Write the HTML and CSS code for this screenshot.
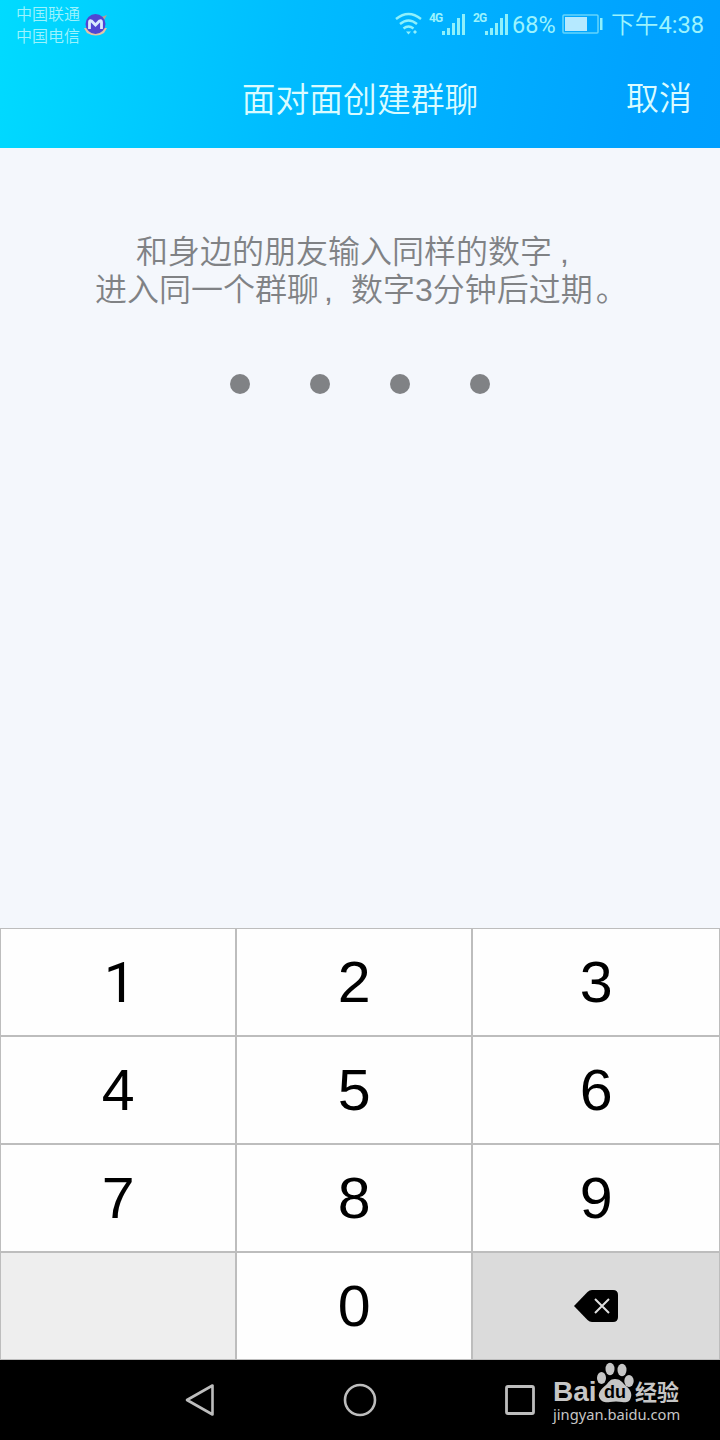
FILE: index.html
```html
<!DOCTYPE html>
<html lang="zh-CN">
<head>
  <meta charset="UTF-8">
  <title>面对面创建群聊</title>
  <link rel="stylesheet" href="styles.css">
</head>
<body>
  <header class="header">
    <div class="status">
      <div class="carriers">
        <div>中国联通</div>
        <div>中国电信</div>
      </div>
      <svg class="app-icon" width="26" height="26" viewBox="0 0 26 26">
        <path d="M2 15l3 5q9 5 17 0l3-5z" fill="#e3c3a5"/>
        <path d="M19 4l6-2-3 5z" fill="#b4a095"/>
        <circle cx="13.500" cy="11" r="10" fill="#5146d2"/>
        <path d="M7.500 16V9q0-2 2-1l4 4 4-4q2-1 2 1v7" fill="none" stroke="#d8eaff" stroke-width="2.800"/>
      </svg>
      <div class="indicators">
        <svg class="wifi" width="28" height="24" viewBox="0 0 28 24" fill="none" stroke="#8ff0fb" stroke-width="2.4">
          <path d="M1 7q12.500-10 25 0M5 12q8.500-7 17 0M8.500 16.500q5-4 10 0"/>
          <path d="M11 19.500h5l-2.500 3zM18 20l2-2 2 2-2 2z" fill="#8ff0fb" stroke="none"/>
        </svg>
        <span class="net">4G</span>
        <svg class="signal" width="24" height="24" viewBox="0 0 24 24" fill="#8ff0fb">
          <path d="M0 19h3v4H0zM5 16h3v7H5zM10 11h3v12h-3zM15 6h3v17h-3zM20 2h3v21h-3z"/>
        </svg>
        <span class="net net-second">2G</span>
        <svg class="signal" width="24" height="24" viewBox="0 0 24 24" fill="#8ff0fb">
          <path d="M0 19h3v4H0zM5 16h3v7H5zM10 11h3v12h-3zM15 6h3v17h-3zM20 2h3v21h-3z"/>
        </svg>
        <span class="percent">68%</span>
        <svg class="battery" width="42" height="20" viewBox="0 0 42 20">
          <rect x="1" y="1" width="35" height="18" rx="1" fill="none" stroke="#66d5fb" stroke-width="1.500"/>
          <rect x="3" y="3" width="22" height="14" fill="#b5e9ff"/>
          <rect x="38" y="4" width="2.500" height="12" fill="#8ff0fb"/>
        </svg>
        <span class="time">下午<span class="clock">4:38</span></span>
      </div>
    </div>
    <div class="titlebar">
      <h1 class="title">面对面创建群聊</h1>
      <a class="cancel">取消</a>
    </div>
  </header>

  <main class="main">
    <p class="tip tip-first">和身边的朋友输入同样的数字<span class="comma">,</span></p>
    <p class="tip">进入同一个群聊<span class="comma comma-wide">,</span>数字3分钟后过期<span class="stop">。</span></p>
    <div class="dots">
      <span class="dot"></span>
      <span class="dot"></span>
      <span class="dot"></span>
      <span class="dot"></span>
    </div>
  </main>

  <div class="keypad">
    <div class="key key-one"><span>1</span></div>
    <div class="key"><span>2</span></div>
    <div class="key"><span>3</span></div>
    <div class="key"><span>4</span></div>
    <div class="key"><span>5</span></div>
    <div class="key"><span>6</span></div>
    <div class="key"><span>7</span></div>
    <div class="key"><span>8</span></div>
    <div class="key"><span>9</span></div>
    <div class="key key-empty"></div>
    <div class="key"><span>0</span></div>
    <div class="key key-delete">
      <svg width="44" height="32" viewBox="0 0 44 32">
        <path d="M0 16L13.500 2Q15.500 0 18 0H39q5 0 5 5V27q0 5-5 5H18q-2.500 0-4.500-2z" fill="#000"/>
        <path d="M21 9l14 14M35 9L21 23" stroke="#ddd" stroke-width="2"/>
      </svg>
    </div>
  </div>

  <nav class="navbar">
    <svg width="32" height="36" viewBox="0 0 32 36" fill="none" stroke="#bdbdbd" stroke-width="2.600" stroke-linejoin="round">
      <path d="M3 18L28.500 3.500v29z"/>
    </svg>
    <svg width="36" height="36" viewBox="0 0 36 36" fill="none" stroke="#bdbdbd" stroke-width="2.600">
      <circle cx="18" cy="18" r="15"/>
    </svg>
    <svg width="32" height="36" viewBox="0 0 32 36" fill="none" stroke="#bdbdbd" stroke-width="2.800">
      <rect x="2.500" y="4.500" width="27" height="27" rx="1.500"/>
    </svg>
    <div class="watermark">
      <div class="brand">
        <span class="bai">Bai</span>
        <span class="paw">
          <svg width="38" height="42" viewBox="0 0 38 42" fill="#c6c6c6">
            <ellipse cx="4.500" cy="16" rx="4.500" ry="6"/>
            <ellipse cx="13" cy="7" rx="4.500" ry="6.200"/>
            <ellipse cx="25" cy="8" rx="4.500" ry="6.200"/>
            <ellipse cx="32" cy="19" rx="4.700" ry="6"/>
            <path d="M18 17c5 0 7 3 10 6 5 4 7 8 6 12-1 5-5 6-9 5q-6-1-12 0c-4 1-9 0-11-5-1-4 2-8 7-12 3-3 4-6 9-6z"/>
          </svg>
          <span class="du">du</span>
        </span>
        <span class="jingyan">经验</span>
      </div>
      <div class="site">jingyan.baidu.com</div>
    </div>
  </nav>
</body>
</html>
```
FILE: styles.css
```css
* {
  box-sizing: border-box;
}
body {
  margin: 0;
  width: 720px;
  height: 1440px;
  display: flex;
  flex-direction: column;
  overflow: hidden;
  background: #f4f7fc;
  font-family: Roboto, "Noto Sans CJK SC", sans-serif;
}
svg {
  display: block;
  flex: none;
}
.header {
  height: 148px;
  background: linear-gradient(100deg, #00dbff 0%, #00bcff 40%, #00a2ff 88%, #009fff 100%);
}
.status {
  height: 48px;
  display: flex;
  padding-left: 16px;
  color: #9cf3fd;
}
.carriers {
  padding-top: 4px;
  width: 66px;
  font-size: 16px;
  font-weight: 350;
  line-height: 22px;
  white-space: nowrap;
}
.app-icon {
  margin-top: 13px;
}
.indicators {
  display: flex;
  margin-left: 287px;
  line-height: 50px;
  white-space: nowrap;
}
.wifi {
  margin-top: 12px;
}
.net {
  width: 13px;
  margin-left: 6px;
  font-size: 12px;
  font-weight: bold;
  line-height: 36px;
  letter-spacing: -1px;
}
.net-second {
  margin-left: 7px;
}
.signal {
  margin-top: 12px;
}
.net-second + .signal {
  margin-left: -1px;
}
.percent {
  width: 50px;
  margin-left: 3px;
  font-size: 23.5px;
}
.battery {
  margin-top: 14px;
}
.time {
  margin-left: 7px;
  font-size: 23.7px;
  font-weight: 350;
}
.clock {
  font-weight: 400;
}
.titlebar {
  height: 100px;
  display: grid;
  grid-template-columns: 120px 1fr 120px;
  align-items: start;
  color: #d9fbff;
}
.title {
  grid-column: 2;
  margin: 0;
  padding-top: 28px;
  font-size: 33.8px;
  font-weight: 350;
  line-height: 50px;
  text-align: center;
}
.cancel {
  padding-top: 26px;
  padding-right: 28px;
  font-size: 33px;
  font-weight: 350;
  line-height: 50px;
  text-align: right;
}
.main {
  height: 780px;
  padding-top: 85px;
}
.tip {
  margin: 0;
  padding-left: 95px;
  color: #808285;
  font-family: "Liberation Sans", "Noto Sans CJK SC", sans-serif;
  font-size: 32px;
  font-weight: 350;
  line-height: 38px;
  white-space: nowrap;
}
.tip-first {
  padding-left: 136px;
}
.comma {
  padding-left: 8px;
}
.comma-wide {
  display: inline-block;
  width: 32px;
  padding-left: 5px;
}
.stop {
  margin-left: 3px;
}
.dots {
  display: flex;
  justify-content: center;
  gap: 60px;
  padding-top: 65px;
}
.dot {
  width: 20px;
  height: 20px;
  border-radius: 50%;
  background: #808285;
}
.keypad {
  height: 432px;
  display: grid;
  grid-template-columns: 236px 236px 248px;
  grid-template-rows: repeat(4, 108px);
}
.key {
  display: flex;
  align-items: center;
  justify-content: center;
  border: 1px solid #bdbdbd;
  background: #fefefe;
  color: #000;
  font-family: "Liberation Sans", sans-serif;
  font-size: 58px;
  line-height: 1;
}
.key span {
  transform: scaleX(1.02);
}
.key-one {
  padding: 2px 0 0 3px;
  font-family: Roboto, sans-serif;
  font-size: 56px;
}
.key-empty {
  background: #eee;
}
.key-delete {
  background: #dbdbdb;
}
.navbar {
  height: 80px;
  display: flex;
  align-items: flex-start;
  padding: 22px 0 0 184px;
  background: #000;
}
.navbar > svg + svg {
  margin-left: 126px;
}
.watermark {
  margin-left: 17px;
  margin-top: -22px;
  color: #c6c6c6;
}
.brand {
  display: flex;
  height: 44px;
}
.bai {
  width: 44px;
  padding-top: 17px;
  font: bold 28px/30px "Liberation Sans", sans-serif;
}
.paw {
  position: relative;
  width: 38px;
  padding-top: 2px;
}
.du {
  position: absolute;
  left: 7px;
  top: 23px;
  color: #000;
  font: bold 18px/18px "Liberation Sans", sans-serif;
}
.jingyan {
  padding-top: 18px;
  font-size: 22px;
  font-weight: bold;
  line-height: 30px;
}
.site {
  font: 14.7px/20px "Noto Sans", sans-serif;
}
```
